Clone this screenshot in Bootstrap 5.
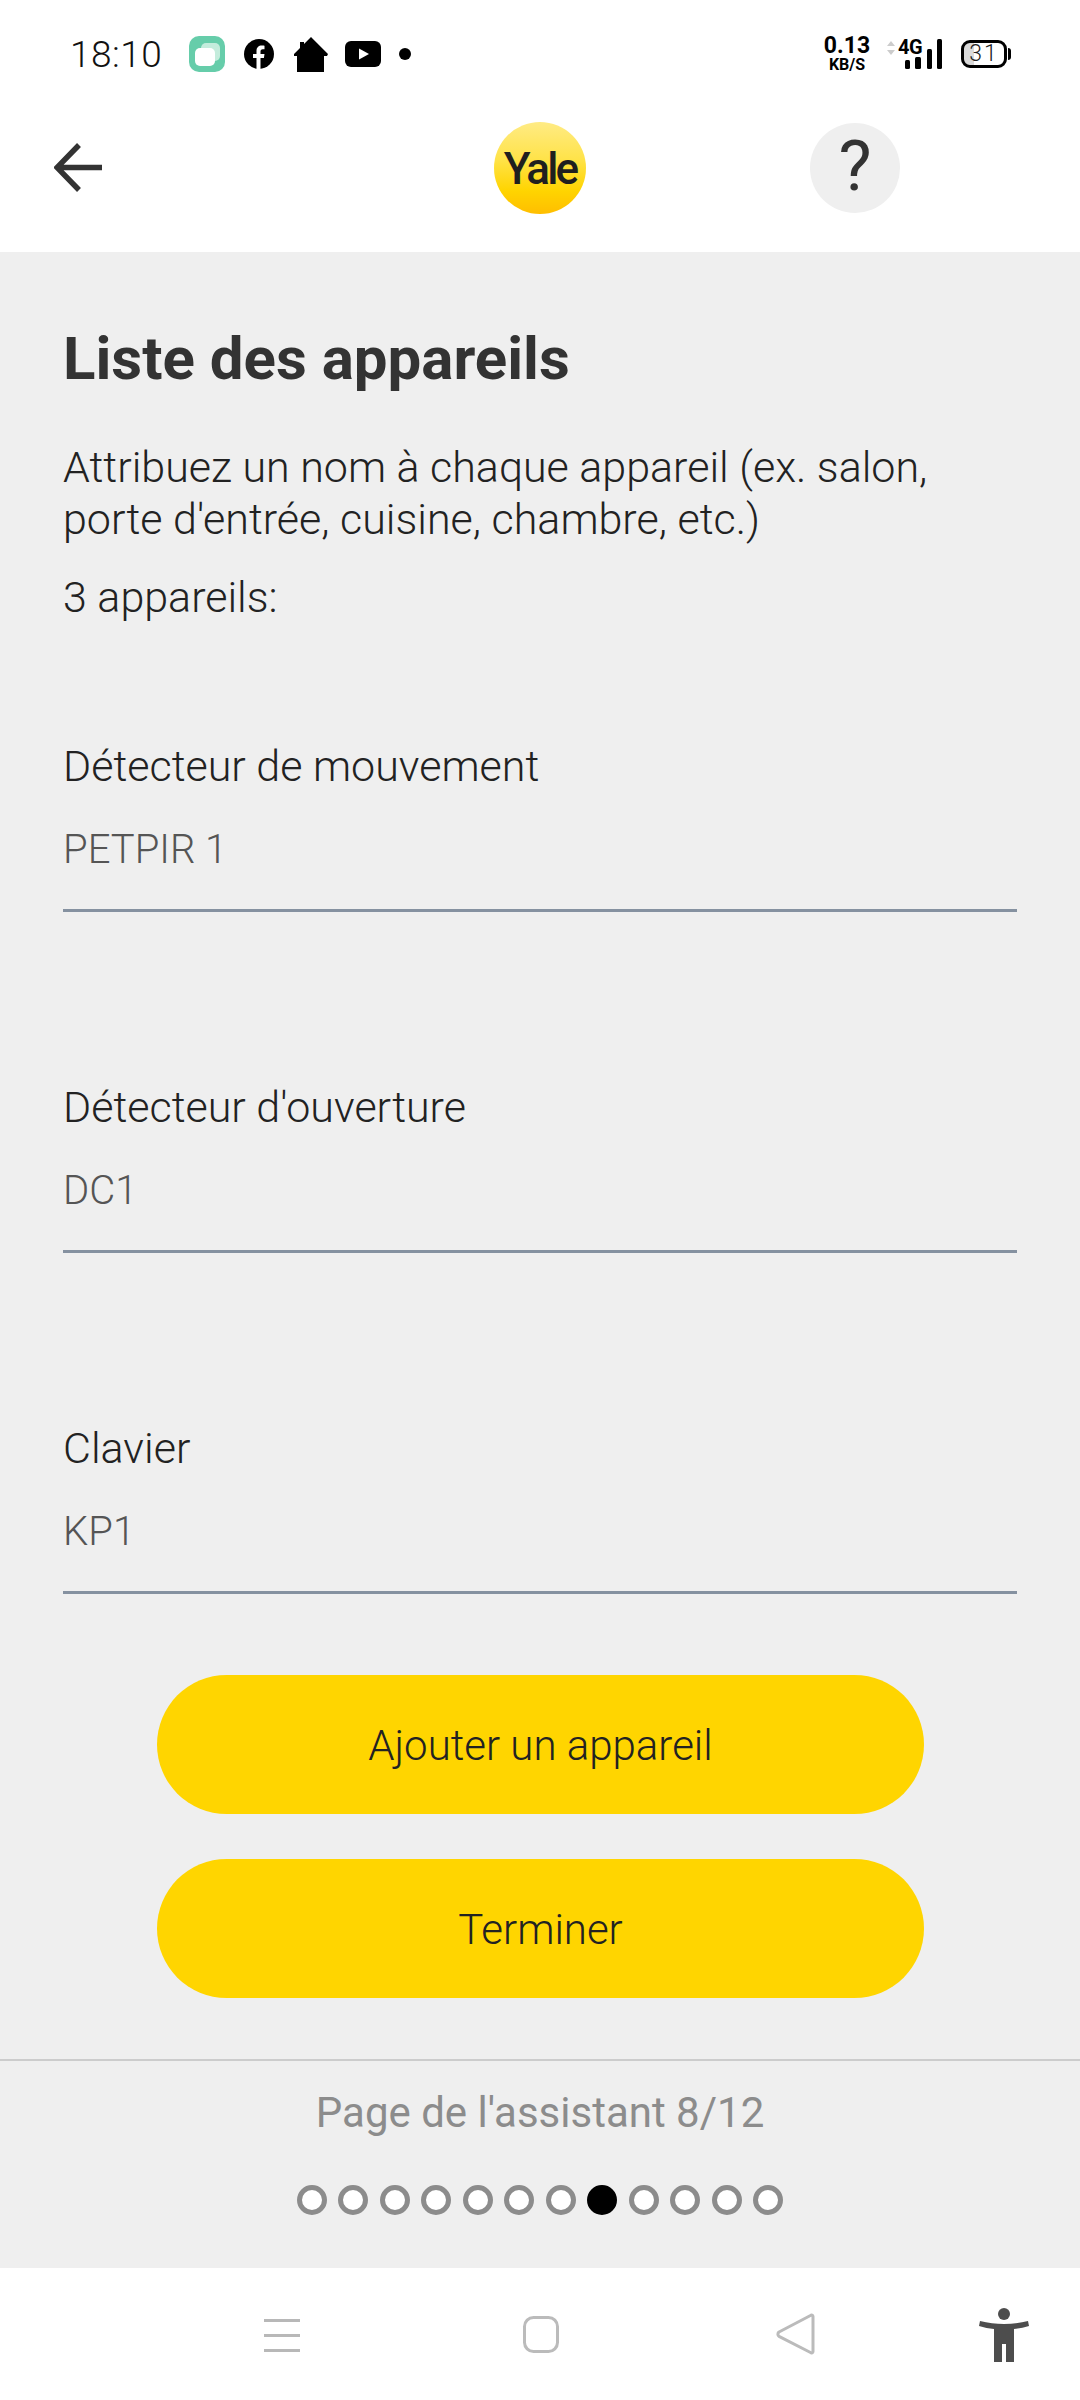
<!DOCTYPE html>
<html lang="fr">
<head>
<meta charset="utf-8">
<title>Liste des appareils</title>
<link href="https://cdn.jsdelivr.net/npm/bootstrap@5.3.0/dist/css/bootstrap.min.css" rel="stylesheet">
<style>
html,body{height:2400px;overflow:hidden}
body{width:1080px;background:#fff;font-family:Roboto,"Liberation Sans",sans-serif;color:#333}
.app-shell{height:2400px}
.status-strip{height:90px;padding:18px 73px 0 70px;color:#000}
.status-time{font-size:37px;font-weight:300;line-height:1;letter-spacing:.5px;margin-right:27px;color:#111}
.status-left svg{flex:none}
.net-speed{width:48px;margin-right:16px;font-weight:700;text-align:center;line-height:1}
.net-num{font-size:23px;line-height:17px;height:21px;overflow:visible}
.net-unit{font-size:16px;line-height:13px;height:13px;white-space:nowrap}
.batt-box{width:46px;height:28px;border:3px solid #000;border-radius:9px;font-size:23px;font-weight:300;line-height:22px;text-align:center;margin-left:18px;position:relative;background:linear-gradient(90deg,#d9d9d9 0 10px,transparent 10px);background-origin:content-box;background-clip:content-box;letter-spacing:2px;color:#222}
.batt-box::after{content:"";position:absolute;right:-7px;top:5px;width:3px;height:12px;background:#000;border-radius:0 3px 3px 0}
.top-head{height:162px;padding-bottom:6px;position:relative}
.back-btn{position:absolute;left:54px;top:53px}
.yale-logo{width:92px;height:92px;border-radius:50%;background:linear-gradient(180deg,#ffeb84 0%,#ffe34a 40%,#ffd400 75%,#ffbe00 100%);font-size:44px;font-weight:500;letter-spacing:-2.8px;color:#1f1f1f;line-height:94px;text-align:center}
.help-circle{position:absolute;left:810px;top:33px;width:90px;height:90px;border-radius:50%;background:#efefef;font-size:70px;line-height:86px;text-align:center;color:#333}
.wizard-body{background:#efefef;height:1807px;padding:0 63px}
.wizard-title{font-size:60px;font-weight:700;line-height:64px;margin:75px 0 0;color:#333}
.wizard-intro{font-size:43px;font-weight:300;line-height:52px;margin:50px 0 0;color:#222;white-space:nowrap}
.wizard-count{font-size:43px;font-weight:300;line-height:52px;margin:26px 0 0;color:#222}
.dev-field{height:341px}
.dev-first{margin-top:117px}
.dev-last{height:auto}
.dev-label{font-size:43px;font-weight:300;line-height:52px;margin:0;color:#222}
.dev-value{font-size:40px;font-weight:300;line-height:52px;height:120px;padding:32px 0 0;color:#555;border:0;border-bottom:3px solid #8591a0;border-radius:0;width:954px;box-sizing:border-box}
.yale-actions{margin-top:81px}
.yale-btn{display:block;width:767px;height:139px;margin:0 0 45px 94px;background:#ffd500;border:0;border-radius:70px;font-size:42px;font-weight:300;color:#222;line-height:141px;padding:0}
.wizard-foot{background:#efefef;height:209px;border-top:2px solid #ccc;margin:0}
.foot-text{font-size:42px;font-weight:400;line-height:46px;color:#8c8c8c;margin:0;padding-top:29px;text-align:center}
.dots-row{gap:11.5px;margin-top:49px}
.wiz-dot{width:30px;height:30px;border-radius:50%;border:5px solid #8c8c8c;background:#fff}
.wiz-dot-on{background:#000;border-color:#000}
.nav-strip{height:132px;position:relative}
.nav-strip svg{position:absolute}
.nav-menu{left:264px;top:49px}
.nav-home{left:523px;top:48px}
.nav-back{left:776px;top:45px}
.nav-person{left:979px;top:40px}
</style>
</head>
<body>
<div class="app-shell d-flex flex-column">
  <div class="status-strip d-flex align-items-center justify-content-between">
    <div class="status-left d-flex align-items-center">
      <span class="status-time">18:10</span>
      <svg width="36" height="36" viewBox="0 0 36 36" style="margin-right:19px"><rect width="36" height="36" rx="10" fill="#66cdaa"/><rect x="12" y="7" width="19" height="18" rx="5" fill="#c4ecdc"/><rect x="6" y="12" width="20" height="18" rx="5" fill="#fff"/></svg>
      <svg width="30" height="30" viewBox="0 0 30 30" style="margin-right:20px"><circle cx="15" cy="15" r="15" fill="#000"/><path d="M12.500 30V19H9v-4h3.500v-3c0-3.600 2.100-5.500 5.300-5.500 1.500 0 2.700.2 2.700.2v3.500h-1.700c-1.800 0-2.300 1.100-2.300 2.200V15h4l-.6 4h-3.400v11z" fill="#fff"/></svg>
      <svg width="34" height="35" viewBox="0 0 34 35" style="margin-right:17px"><path d="M17 0 23.500 6.500 34 17 33 19H30V35H3V19H0L0 17 6 11V5H10V7Z" fill="#000"/></svg>
      <svg width="36" height="26" viewBox="0 0 36 26" style="margin-right:18px"><rect width="36" height="26" rx="6" fill="#000"/><path d="M14 7.500 24 13 14 18.500z" fill="#fff"/></svg>
      <svg width="12" height="12" viewBox="0 0 12 12"><circle cx="6" cy="6" r="6" fill="#000"/></svg>
    </div>
    <div class="d-flex align-items-center">
      <div class="net-speed"><div class="net-num">0.13</div><div class="net-unit">KB/S</div></div>
      <svg width="56" height="46" viewBox="0 -8 56 46">
        <path d="M0 7 4 2 8 7zM0 11 4 16 8 11z" fill="#ccc"/>
        <text x="11" y="15" font-family="Roboto,sans-serif" font-size="20" font-weight="700" letter-spacing="-.5">4G</text>
        <rect x="18" y="21" width="5" height="9" rx="1.500"/><rect x="28" y="18" width="6" height="12" rx="1.500"/><rect x="40" y="10" width="5" height="20" rx="1.500"/><rect x="50" y="0" width="5" height="30" rx="1.500"/>
      </svg>
      <div class="batt-box">31</div>
    </div>
  </div>
  <header class="top-head d-flex align-items-center justify-content-center">
    <svg class="back-btn" width="49" height="49" viewBox="0 0 49 49" fill="none" stroke="#333" stroke-width="5.500"><path d="M48 24.500H5M25 2 3 24.500 25 47"/></svg>
    <div class="yale-logo">Yale</div>
    <div class="help-circle">?</div>
  </header>
  <main class="wizard-body">
    <h1 class="wizard-title">Liste des appareils</h1>
    <p class="wizard-intro">Attribuez un nom à chaque appareil (ex. salon,<br>porte d'entrée, cuisine, chambre, etc.)</p>
    <p class="wizard-count">3 appareils:</p>
    <div class="dev-field dev-first"><label class="dev-label d-block">Détecteur de mouvement</label><div class="dev-value">PETPIR 1</div></div>
    <div class="dev-field"><label class="dev-label d-block">Détecteur d'ouverture</label><div class="dev-value">DC1</div></div>
    <div class="dev-field dev-last"><label class="dev-label d-block">Clavier</label><div class="dev-value">KP1</div></div>
    <div class="yale-actions">
      <button class="btn yale-btn" type="button">Ajouter un appareil</button>
      <button class="btn yale-btn" type="button">Terminer</button>
    </div>
  </main>
  <footer class="wizard-foot">
    <p class="foot-text">Page de l'assistant 8/12</p>
    <div class="dots-row d-flex justify-content-center">
      <span class="wiz-dot"></span><span class="wiz-dot"></span><span class="wiz-dot"></span><span class="wiz-dot"></span><span class="wiz-dot"></span><span class="wiz-dot"></span><span class="wiz-dot"></span><span class="wiz-dot wiz-dot-on"></span><span class="wiz-dot"></span><span class="wiz-dot"></span><span class="wiz-dot"></span><span class="wiz-dot"></span>
    </div>
  </footer>
  <nav class="nav-strip">
    <svg class="nav-menu" width="36" height="36" viewBox="0 0 36 36" fill="#b8b8b8"><rect y="2" width="36" height="3"/><rect y="17" width="36" height="3"/><rect y="32" width="36" height="3"/></svg>
    <svg class="nav-home" width="36" height="37" viewBox="0 0 36 37" fill="none" stroke="#bbb" stroke-width="3"><rect x="1.500" y="1.500" width="33" height="34" rx="9"/></svg>
    <svg class="nav-back" width="40" height="42" viewBox="0 0 40 42" fill="none" stroke="#bbb" stroke-width="3" stroke-linejoin="round"><path d="M37 3.500c0-1.500-1.500-2-2.500-1L3 19c-1.500 1.300-1.500 3 0 4.300L34.500 39.500c1 1 2.500.5 2.500-1z"/></svg>
    <svg class="nav-person" width="50" height="54" viewBox="0 0 50 54" fill="#4d4d4d"><ellipse cx="25" cy="6" rx="6" ry="6"/><path d="M1 13c8 2 16 3 24 3s16-1 24-3l1 5c-5 1.500-10 2.500-15 3v33h-8V36h-4v18h-8V21c-5-.5-10-1.500-15-3z"/></svg>
  </nav>
</div>
</body>
</html>
